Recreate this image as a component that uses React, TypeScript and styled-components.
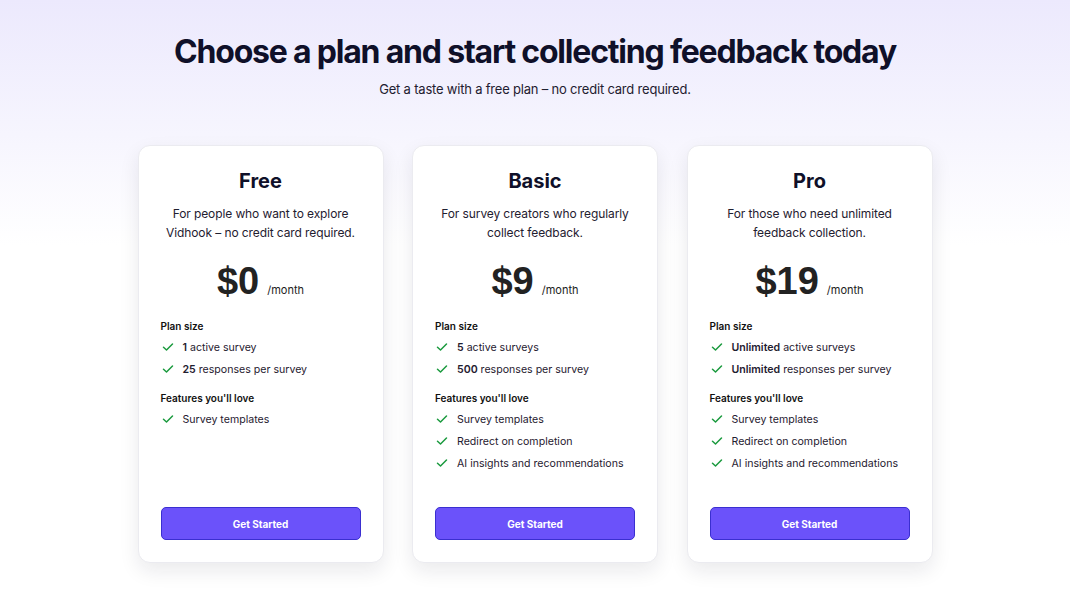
import React from "react";
import styled, { createGlobalStyle } from "styled-components";

const Global = createGlobalStyle`
  html, body { margin: 0; padding: 0; }
  body {
    font-family: Inter, "Noto Sans", sans-serif;
    background: #ffffff;
    color: #111827;
  }
`;

const Page = styled.div`
  min-height: 612px;
  background: linear-gradient(180deg, #ece9fd 0%, #f6f5fe 22%, #ffffff 40%, #ffffff 100%);
  display: flex;
  flex-direction: column;
  align-items: center;
  padding-top: 32px;
  box-sizing: border-box;
`;

const Title = styled.h1`
  margin: 0;
  font-size: 32px;
  line-height: 40px;
  font-weight: 700;
  letter-spacing: -1.2px;
  color: #0f1029;
`;

const Subtitle = styled.p`
  margin: 8px 0 0;
  font-size: 13px;
  line-height: 18px;
  letter-spacing: -0.2px;
  color: #1f2030;
`;

const Grid = styled.div`
  margin-top: 47px;
  display: grid;
  grid-template-columns: repeat(3, 246px);
  column-gap: 28.5px;
`;

const Card = styled.div`
  background: #ffffff;
  border: 1px solid #ebebf0;
  border-radius: 12px;
  box-shadow: 0 8px 20px rgba(20, 20, 40, 0.09);
  height: 418px;
  box-sizing: border-box;
  padding: 22px 22px 22px;
  display: flex;
  flex-direction: column;
`;

const PlanName = styled.h2`
  margin: 0;
  text-align: center;
  font-size: 20px;
  line-height: 26px;
  font-weight: 700;
  color: #0f1029;
`;

const Desc = styled.p`
  margin: 10px 0 0;
  text-align: center;
  font-size: 12px;
  line-height: 19px;
  letter-spacing: -0.1px;
  white-space: nowrap;
  color: #1f2030;
`;

const PriceRow = styled.div`
  margin-top: 19px;
  display: flex;
  justify-content: center;
  align-items: baseline;
  gap: 8px;
`;

const Price = styled.span`
  font-family: "Liberation Sans", Arial, sans-serif;
  font-size: 38px;
  line-height: 40px;
  font-weight: 700;
  color: #222222;
`;

const Per = styled.span`
  font-size: 11px;
  color: #222;
`;

const Section = styled.div<{ $top: number }>`
  margin-top: ${(p) => p.$top}px;
  display: flex;
  flex-direction: column;
`;

const SectionLabel = styled.div`
  font-size: 10px;
  line-height: 14px;
  font-weight: 600;
  color: #111;
  margin-bottom: 3px;
`;

const Item = styled.div`
  display: flex;
  align-items: center;
  height: 22px;
  font-size: 10.6px;
  color: #1f2030;
  gap: 9px;
  padding-left: 1px;
  b { font-weight: 600; }
`;

const Check = styled.svg`
  width: 12px;
  height: 12px;
  flex: none;
`;

const Spacer = styled.div`
  flex: 1;
`;

const Button = styled.button`
  height: 33px;
  width: 100%;
  border-radius: 5px;
  border: 1px solid #3a2fd0;
  background: #6b52fa;
  color: #fff;
  font-family: Inter, sans-serif;
  font-size: 10px;
  font-weight: 700;
  cursor: pointer;
`;

const CheckIcon = () => (
  <Check viewBox="0 0 12 12" fill="none">
    <path d="M1.5 6.3 L4.5 9 L10.5 3" stroke="#1a9a3e" strokeWidth="1.5" strokeLinecap="round" strokeLinejoin="round" />
  </Check>
);

type Plan = {
  name: string;
  desc: React.ReactNode;
  price: string;
  size: React.ReactNode[];
  features: string[];
};

const plans: Plan[] = [
  {
    name: "Free",
    desc: (<>For people who want to explore<br />Vidhook – no credit card required.</>),
    price: "$0",
    size: [<><b>1</b> active survey</>, <><b>25</b> responses per survey</>],
    features: ["Survey templates"],
  },
  {
    name: "Basic",
    desc: (<>For survey creators who regularly<br />collect feedback.</>),
    price: "$9",
    size: [<><b>5</b> active surveys</>, <><b>500</b> responses per survey</>],
    features: ["Survey templates", "Redirect on completion", "AI insights and recommendations"],
  },
  {
    name: "Pro",
    desc: (<>For those who need unlimited<br />feedback collection.</>),
    price: "$19",
    size: [<><b>Unlimited</b> active surveys</>, <><b>Unlimited</b> responses per survey</>],
    features: ["Survey templates", "Redirect on completion", "AI insights and recommendations"],
  },
];

export default function App() {
  return (
    <>
      <Global />
      <Page>
        <Title>Choose a plan and start collecting feedback today</Title>
        <Subtitle>Get a taste with a free plan – no credit card required.</Subtitle>
        <Grid>
          {plans.map((p) => (
            <Card key={p.name}>
              <PlanName>{p.name}</PlanName>
              <Desc>{p.desc}</Desc>
              <PriceRow>
                <Price>{p.price}</Price>
                <Per>/month</Per>
              </PriceRow>
              <Section $top={18}>
                <SectionLabel>Plan size</SectionLabel>
                {p.size.map((s, i) => (
                  <Item key={i}><CheckIcon /><span>{s}</span></Item>
                ))}
              </Section>
              <Section $top={11}>
                <SectionLabel>Features you'll love</SectionLabel>
                {p.features.map((f) => (
                  <Item key={f}><CheckIcon /><span>{f}</span></Item>
                ))}
              </Section>
              <Spacer />
              <Button>Get Started</Button>
            </Card>
          ))}
        </Grid>
      </Page>
    </>
  );
}
